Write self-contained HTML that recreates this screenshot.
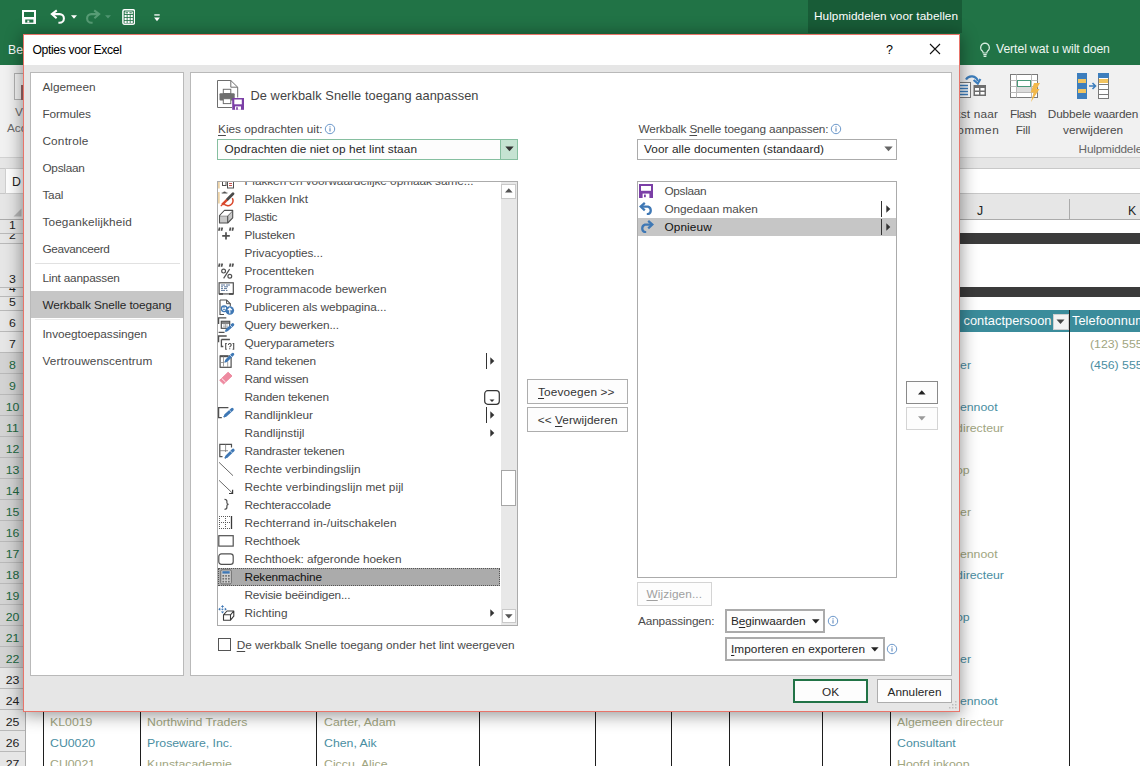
<!DOCTYPE html>
<html><head><meta charset="utf-8"><title>Opties voor Excel</title>
<style>
html,body{margin:0;padding:0;}
body{width:1140px;height:766px;overflow:hidden;position:relative;background:#fff;font-family:"Liberation Sans",sans-serif;}
.r{position:absolute;box-sizing:border-box;}
.t{position:absolute;white-space:nowrap;line-height:16px;height:16px;}
u{text-decoration:underline;text-underline-offset:1.5px;text-decoration-thickness:1px;}
#bg,#dlg{position:absolute;left:0;top:0;width:1140px;height:766px;overflow:hidden;}
</style></head><body>
<div id="bg">
<div class="r" style="left:0px;top:0px;width:1140px;height:65px;background:#217346;"></div>
<div class="r" style="left:808px;top:0px;width:154px;height:33px;background:#185c37;"></div>
<div class="t" style="left:814.00px;top:7.91px;font-size:11.80px;color:#fff;letter-spacing:0.040px;">Hulpmiddelen voor tabellen</div>
<svg class="r" style="left:22px;top:10px;" width="14" height="14" viewBox="0 0 14 14"><rect x="1" y="1" width="12" height="12" fill="none" stroke="#fff" stroke-width="2"/><rect x="1" y="7" width="12" height="7" fill="#fff"/><rect x="3.200" y="9.500" width="8.200" height="3.100" fill="#217346"/><rect x="5.300" y="10.500" width="2" height="2.100" fill="#fff"/></svg>
<svg class="r" style="left:50px;top:9px;" width="16" height="15" viewBox="0 0 16 15"><path d="M6.800 1.400 L1.900 5.100 L6.600 9.200" fill="none" stroke="#fff" stroke-width="2.100"/><path d="M2.400 5.100 H9.600 A4.300 4.300 0 0 1 9.600 13.700 H8.400" fill="none" stroke="#fff" stroke-width="2.100"/></svg>
<svg class="r" style="left:70.5px;top:14.5px;" width="6" height="4" viewBox="0 0 6 4"><path d="M0 0.200h6L3 3.800z" fill="#fff"/></svg>
<svg class="r" style="left:85px;top:9px;" width="16" height="15" viewBox="0 0 16 15"><g opacity="0.400"><path d="M9.200 1.400 L14.100 5.100 L9.400 9.200" fill="none" stroke="#a9d9bd" stroke-width="2.100"/><path d="M13.600 5.100 H6.400 A4.300 4.300 0 0 0 6.400 13.700 H7.600" fill="none" stroke="#a9d9bd" stroke-width="2.100"/></g></svg>
<svg class="r" style="left:105px;top:15px;" width="6" height="4" viewBox="0 0 6 4"><path d="M0 0.200h6L3 3.600z" fill="#4f9470"/></svg>
<svg class="r" style="left:121.5px;top:9px;" width="13.5" height="16" viewBox="0 0 13.5 16"><rect x="0.900" y="0.800" width="11.700" height="14.400" rx="1.500" fill="none" stroke="#fff" stroke-width="1.500"/><rect x="2.700" y="2.500" width="8.100" height="2.600" rx="0.600" fill="#fff"/><rect x="3.600" y="3.300" width="2.400" height="1" fill="#217346"/><rect x="7.400" y="3.300" width="2.400" height="1" fill="#217346"/><rect x="2.5" y="5.9" width="2.200" height="2.200" fill="#fff"/><rect x="5.55" y="5.9" width="2.200" height="2.200" fill="#fff"/><rect x="8.6" y="5.9" width="2.200" height="2.200" fill="#fff"/><rect x="2.5" y="8.9" width="2.200" height="2.200" fill="#fff"/><rect x="5.55" y="8.9" width="2.200" height="2.200" fill="#fff"/><rect x="8.6" y="8.9" width="2.200" height="2.200" fill="#fff"/><rect x="2.5" y="11.9" width="2.200" height="2.200" fill="#fff"/><rect x="5.55" y="11.9" width="2.200" height="2.200" fill="#fff"/><rect x="8.6" y="11.9" width="2.200" height="2.200" fill="#fff"/></svg>
<svg class="r" style="left:153.5px;top:13.5px;" width="6" height="8" viewBox="0 0 6 8"><rect x="0.300" y="0.300" width="5.400" height="1.300" fill="#fff"/><path d="M0.100 3.500h5.800L3 7.200z" fill="#fff"/></svg>
<div class="t" style="left:8.00px;top:41.77px;font-size:12.20px;color:#fff;">Bes</div>
<svg class="r" style="left:978.5px;top:42px;" width="12" height="16" viewBox="0 0 12 16"><path d="M6 1.2a4.4 4.4 0 0 0-2.6 7.9c.5.5.8 1.1.8 1.9h3.6c0-.8.3-1.4.8-1.9A4.4 4.4 0 0 0 6 1.2z" fill="none" stroke="#d6ecdf" stroke-width="1.2"/><path d="M4.3 12.6h3.4M4.6 14.4h2.8" stroke="#d6ecdf" stroke-width="1.2"/></svg>
<div class="t" style="left:996.00px;top:41.27px;font-size:12.20px;color:#eef6f1;letter-spacing:-0.061px;">Vertel wat u wilt doen</div>
<div class="r" style="left:0px;top:65px;width:1140px;height:92px;background:#f1f1f1;"></div>
<div class="r" style="left:0px;top:157px;width:1140px;height:1px;background:#d2d2d2;"></div>
<div class="r" style="left:0px;top:158px;width:1140px;height:10px;background:#e6e6e6;"></div>
<div class="r" style="left:0px;top:168px;width:1140px;height:1px;background:#c8c8c8;"></div>
<div class="r" style="left:0px;top:169px;width:1140px;height:24px;background:#fff;"></div>
<div class="r" style="left:0px;top:169px;width:5px;height:24px;background:#e6e6e6;"></div>
<div class="r" style="left:0px;top:193px;width:1140px;height:1px;background:#c8c8c8;"></div>
<div class="r" style="left:0px;top:194px;width:1140px;height:25px;background:#e6e6e6;"></div>
<div class="r" style="left:0px;top:219px;width:1140px;height:1px;background:#ababab;"></div>
<div class="r" style="left:14px;top:73px;width:12px;height:27px;border:1px solid #b4b4b4;background:#f6f6f6;"></div>
<div class="t" style="left:15.00px;top:104.41px;font-size:11.80px;color:#6a6a6a;">V</div>
<div class="t" style="left:7.00px;top:120.41px;font-size:11.80px;color:#6a6a6a;">Acc</div>
<div class="r" style="left:21px;top:85px;width:3px;height:15px;background:#9a6a6a;"></div>
<div class="r" style="left:5px;top:168px;width:40px;height:26px;background:#fff;border:1px solid #d0d0d0;"></div>
<div class="t" style="left:12.00px;top:173.74px;font-size:12.30px;color:#222;">D</div>
<div class="t" style="left:970.00px;width:400px;margin-left:-200px;text-align:center;top:105.91px;font-size:11.80px;color:#4a4a4a;letter-spacing:0.174px;">Tekst naar</div>
<div class="t" style="left:970.00px;width:400px;margin-left:-200px;text-align:center;top:121.91px;font-size:11.80px;color:#4a4a4a;letter-spacing:0.510px;">kolommen</div>
<div class="t" style="left:1023.00px;width:400px;margin-left:-200px;text-align:center;top:105.91px;font-size:11.80px;color:#4a4a4a;letter-spacing:-0.589px;">Flash</div>
<div class="t" style="left:1023.00px;width:400px;margin-left:-200px;text-align:center;top:121.91px;font-size:11.80px;color:#4a4a4a;letter-spacing:-0.124px;">Fill</div>
<div class="t" style="left:1093.00px;width:400px;margin-left:-200px;text-align:center;top:105.91px;font-size:11.80px;color:#4a4a4a;letter-spacing:-0.143px;">Dubbele waarden</div>
<div class="t" style="left:1093.00px;width:400px;margin-left:-200px;text-align:center;top:121.91px;font-size:11.80px;color:#4a4a4a;letter-spacing:-0.034px;">verwijderen</div>
<div class="t" style="left:1078.60px;top:140.91px;font-size:11.80px;color:#666;letter-spacing:-0.196px;">Hulpmiddelen</div>
<svg class="r" style="left:944px;top:72px;" width="44" height="27" viewBox="0 0 44 27"><g fill="none"><path d="M22 7.500a6.500 6.500 0 0 1 11.800 1.500" stroke="#3d7ebd" stroke-width="2.200"/><path d="M29.600 8l4.200 3.600 2.600-4.600" stroke="#3d7ebd" stroke-width="2.200"/>
<rect x="2.500" y="10.500" width="24" height="15" fill="#fff" stroke="#7a7a7a"/><path d="M5 13.500h19M5 16.500h19M5 19.500h19M5 22.500h19" stroke="#3d7ebd" stroke-width="1.500"/>
<rect x="29.500" y="13" width="12.500" height="11" fill="#6e6e6e"/><rect x="31" y="16" width="4" height="2.500" fill="#fff"/><rect x="36.500" y="16" width="4" height="2.500" fill="#fff"/><rect x="31" y="20" width="4" height="2.500" fill="#fff"/><rect x="36.500" y="20" width="4" height="2.500" fill="#fff"/></g></svg>
<svg class="r" style="left:1009px;top:73px;" width="32" height="30" viewBox="0 0 32 30"><rect x="1.5" y="1.5" width="27" height="23" fill="#fff" stroke="#7a7a7a"/><path d="M7.5 1.5v23M1.5 7.5h27M1.5 13.5h27M1.5 19.5h27M22.5 1.5v23" stroke="#b9b9b9" fill="none"/><rect x="8" y="14" width="14" height="5" fill="#dcdcdc"/><rect x="8.5" y="7.5" width="13" height="6" fill="#fff" stroke="#4a9a7a"/><path d="M25 10h6l-3.5 6h3L22 29l2.6-9.5h-3z" fill="#f2b84b"/></svg>
<svg class="r" style="left:1076px;top:72px;" width="34" height="29" viewBox="0 0 34 29"><rect x="1" y="1" width="10" height="26" fill="#3d7ebd"/><rect x="2" y="7" width="8" height="4" fill="#f2c45f"/><rect x="2" y="17" width="8" height="4" fill="#f2c45f"/><rect x="22.5" y="1.5" width="10" height="25" fill="#fff" stroke="#7a7a7a"/><rect x="22" y="1" width="11" height="5" fill="#3d7ebd"/><rect x="23" y="7" width="9" height="4" fill="#f2c45f"/><path d="M22.5 12.500h10M22.500 17.500h10M22.500 22.500h10" stroke="#7a7a7a"/><path d="M13 14h6M16.500 11l3 3-3 3" stroke="#3d7ebd" stroke-width="1.600" fill="none"/></svg>
<div class="r" style="left:1069px;top:199px;width:1px;height:20px;background:#ababab;"></div>
<div class="t" style="left:977.00px;top:202.74px;font-size:12.30px;color:#222;">J</div>
<div class="t" style="left:1128.00px;top:202.74px;font-size:12.30px;color:#222;">K</div>
<svg class="r" style="left:13px;top:208px;" width="9" height="9" viewBox="0 0 9 9"><path d="M8.500 0.500v8h-8z" fill="#b7b7b7"/></svg>
<div class="r" style="left:25px;top:233px;width:1115px;height:11px;background:#3b3b3b;"></div>
<div class="r" style="left:25px;top:287px;width:1115px;height:10px;background:#3b3b3b;"></div>
<div class="r" style="left:25px;top:310px;width:1115px;height:22px;background:#3b8c9b;"></div>
<div class="r" style="left:1069px;top:310px;width:1px;height:456px;background:#1e1e1e;"></div>
<div class="t" style="left:963.50px;top:313.16px;font-size:12.80px;color:#fff;letter-spacing:0.037px;">contactpersoon</div>
<div class="r" style="left:1053px;top:314px;width:16px;height:16px;background:#f3f3f3;border:1px solid #cfcfcf;"></div>
<svg class="r" style="left:1056px;top:319px;" width="9" height="6" viewBox="0 0 9 6"><path d="M0.500 0.500h8L4.500 5z" fill="#444"/></svg>
<div class="t" style="left:1072.00px;top:313.16px;font-size:12.80px;color:#fff;letter-spacing:0.051px;">Telefoonnummer</div>
<div class="r" style="left:0px;top:220px;width:25px;height:546px;background:#e6e6e6;"></div>
<div class="r" style="left:0px;top:352px;width:25px;height:315px;background:#d3d3d3;"></div>
<div class="r" style="left:25px;top:220px;width:1px;height:546px;background:#ababab;"></div>
<div class="r" style="left:0px;top:233px;width:25px;height:1px;background:#b9b9b9;"></div>
<div class="r" style="left:0px;top:243px;width:25px;height:1px;background:#b9b9b9;"></div>
<div class="r" style="left:0px;top:287px;width:25px;height:1px;background:#b9b9b9;"></div>
<div class="r" style="left:0px;top:296px;width:25px;height:1px;background:#b9b9b9;"></div>
<div class="r" style="left:0px;top:310px;width:25px;height:1px;background:#b9b9b9;"></div>
<div class="r" style="left:0px;top:331px;width:25px;height:1px;background:#b9b9b9;"></div>
<div class="r" style="left:0px;top:352px;width:25px;height:1px;background:#b9b9b9;"></div>
<div class="r" style="left:0px;top:373px;width:25px;height:1px;background:#b9b9b9;"></div>
<div class="r" style="left:0px;top:394px;width:25px;height:1px;background:#b9b9b9;"></div>
<div class="r" style="left:0px;top:415px;width:25px;height:1px;background:#b9b9b9;"></div>
<div class="r" style="left:0px;top:436px;width:25px;height:1px;background:#b9b9b9;"></div>
<div class="r" style="left:0px;top:457px;width:25px;height:1px;background:#b9b9b9;"></div>
<div class="r" style="left:0px;top:478px;width:25px;height:1px;background:#b9b9b9;"></div>
<div class="r" style="left:0px;top:499px;width:25px;height:1px;background:#b9b9b9;"></div>
<div class="r" style="left:0px;top:520px;width:25px;height:1px;background:#b9b9b9;"></div>
<div class="r" style="left:0px;top:541px;width:25px;height:1px;background:#b9b9b9;"></div>
<div class="r" style="left:0px;top:562px;width:25px;height:1px;background:#b9b9b9;"></div>
<div class="r" style="left:0px;top:583px;width:25px;height:1px;background:#b9b9b9;"></div>
<div class="r" style="left:0px;top:604px;width:25px;height:1px;background:#b9b9b9;"></div>
<div class="r" style="left:0px;top:625px;width:25px;height:1px;background:#b9b9b9;"></div>
<div class="r" style="left:0px;top:646px;width:25px;height:1px;background:#b9b9b9;"></div>
<div class="r" style="left:0px;top:667px;width:25px;height:1px;background:#b9b9b9;"></div>
<div class="r" style="left:0px;top:688px;width:25px;height:1px;background:#b9b9b9;"></div>
<div class="r" style="left:0px;top:709px;width:25px;height:1px;background:#b9b9b9;"></div>
<div class="r" style="left:0px;top:730px;width:25px;height:1px;background:#b9b9b9;"></div>
<div class="r" style="left:0px;top:751px;width:25px;height:1px;background:#b9b9b9;"></div>
<div class="r" style="left:0px;top:772px;width:25px;height:1px;background:#b9b9b9;"></div>
<div class="r" style="left:0;top:220px;width:25px;height:13px;overflow:hidden;">
<div class="t" style="left:0;width:25px;text-align:center;top:-2.62px;font-size:11.30px;color:#222;transform:scaleX(1.0885);">1</div></div>
<div class="r" style="left:0;top:234px;width:25px;height:9px;overflow:hidden;">
<div class="t" style="left:0;width:25px;text-align:center;top:-6.62px;font-size:11.30px;color:#222;transform:scaleX(1.0885);">2</div></div>
<div class="r" style="left:0;top:244px;width:25px;height:43px;overflow:hidden;">
<div class="t" style="left:0;width:25px;text-align:center;top:27.38px;font-size:11.30px;color:#222;transform:scaleX(1.0885);">3</div></div>
<div class="r" style="left:0;top:288px;width:25px;height:8px;overflow:hidden;">
<div class="t" style="left:0;width:25px;text-align:center;top:-7.62px;font-size:11.30px;color:#222;transform:scaleX(1.0885);">4</div></div>
<div class="r" style="left:0;top:297px;width:25px;height:13px;overflow:hidden;">
<div class="t" style="left:0;width:25px;text-align:center;top:-2.62px;font-size:11.30px;color:#222;transform:scaleX(1.0885);">5</div></div>
<div class="r" style="left:0;top:311px;width:25px;height:20px;overflow:hidden;">
<div class="t" style="left:0;width:25px;text-align:center;top:4.38px;font-size:11.30px;color:#222;transform:scaleX(1.0885);">6</div></div>
<div class="r" style="left:0;top:332px;width:25px;height:20px;overflow:hidden;">
<div class="t" style="left:0;width:25px;text-align:center;top:4.38px;font-size:11.30px;color:#222;transform:scaleX(1.0885);">7</div></div>
<div class="r" style="left:0;top:353px;width:25px;height:20px;overflow:hidden;">
<div class="t" style="left:0;width:25px;text-align:center;top:4.38px;font-size:11.30px;color:#21683f;transform:scaleX(1.0885);">8</div></div>
<div class="r" style="left:0;top:374px;width:25px;height:20px;overflow:hidden;">
<div class="t" style="left:0;width:25px;text-align:center;top:4.38px;font-size:11.30px;color:#21683f;transform:scaleX(1.0885);">9</div></div>
<div class="r" style="left:0;top:395px;width:25px;height:20px;overflow:hidden;">
<div class="t" style="left:0;width:25px;text-align:center;top:4.38px;font-size:11.30px;color:#21683f;transform:scaleX(1.0885);">10</div></div>
<div class="r" style="left:0;top:416px;width:25px;height:20px;overflow:hidden;">
<div class="t" style="left:0;width:25px;text-align:center;top:4.38px;font-size:11.30px;color:#21683f;transform:scaleX(1.0885);">11</div></div>
<div class="r" style="left:0;top:437px;width:25px;height:20px;overflow:hidden;">
<div class="t" style="left:0;width:25px;text-align:center;top:4.38px;font-size:11.30px;color:#21683f;transform:scaleX(1.0885);">12</div></div>
<div class="r" style="left:0;top:458px;width:25px;height:20px;overflow:hidden;">
<div class="t" style="left:0;width:25px;text-align:center;top:4.38px;font-size:11.30px;color:#21683f;transform:scaleX(1.0885);">13</div></div>
<div class="r" style="left:0;top:479px;width:25px;height:20px;overflow:hidden;">
<div class="t" style="left:0;width:25px;text-align:center;top:4.38px;font-size:11.30px;color:#21683f;transform:scaleX(1.0885);">14</div></div>
<div class="r" style="left:0;top:500px;width:25px;height:20px;overflow:hidden;">
<div class="t" style="left:0;width:25px;text-align:center;top:4.38px;font-size:11.30px;color:#21683f;transform:scaleX(1.0885);">15</div></div>
<div class="r" style="left:0;top:521px;width:25px;height:20px;overflow:hidden;">
<div class="t" style="left:0;width:25px;text-align:center;top:4.38px;font-size:11.30px;color:#21683f;transform:scaleX(1.0885);">16</div></div>
<div class="r" style="left:0;top:542px;width:25px;height:20px;overflow:hidden;">
<div class="t" style="left:0;width:25px;text-align:center;top:4.38px;font-size:11.30px;color:#21683f;transform:scaleX(1.0885);">17</div></div>
<div class="r" style="left:0;top:563px;width:25px;height:20px;overflow:hidden;">
<div class="t" style="left:0;width:25px;text-align:center;top:4.38px;font-size:11.30px;color:#21683f;transform:scaleX(1.0885);">18</div></div>
<div class="r" style="left:0;top:584px;width:25px;height:20px;overflow:hidden;">
<div class="t" style="left:0;width:25px;text-align:center;top:4.38px;font-size:11.30px;color:#21683f;transform:scaleX(1.0885);">19</div></div>
<div class="r" style="left:0;top:605px;width:25px;height:20px;overflow:hidden;">
<div class="t" style="left:0;width:25px;text-align:center;top:4.38px;font-size:11.30px;color:#21683f;transform:scaleX(1.0885);">20</div></div>
<div class="r" style="left:0;top:626px;width:25px;height:20px;overflow:hidden;">
<div class="t" style="left:0;width:25px;text-align:center;top:4.38px;font-size:11.30px;color:#21683f;transform:scaleX(1.0885);">21</div></div>
<div class="r" style="left:0;top:647px;width:25px;height:20px;overflow:hidden;">
<div class="t" style="left:0;width:25px;text-align:center;top:4.38px;font-size:11.30px;color:#21683f;transform:scaleX(1.0885);">22</div></div>
<div class="r" style="left:0;top:668px;width:25px;height:20px;overflow:hidden;">
<div class="t" style="left:0;width:25px;text-align:center;top:4.38px;font-size:11.30px;color:#222;transform:scaleX(1.0885);">23</div></div>
<div class="r" style="left:0;top:689px;width:25px;height:20px;overflow:hidden;">
<div class="t" style="left:0;width:25px;text-align:center;top:4.38px;font-size:11.30px;color:#222;transform:scaleX(1.0885);">24</div></div>
<div class="r" style="left:0;top:710px;width:25px;height:20px;overflow:hidden;">
<div class="t" style="left:0;width:25px;text-align:center;top:4.38px;font-size:11.30px;color:#222;transform:scaleX(1.0885);">25</div></div>
<div class="r" style="left:0;top:731px;width:25px;height:20px;overflow:hidden;">
<div class="t" style="left:0;width:25px;text-align:center;top:4.38px;font-size:11.30px;color:#222;transform:scaleX(1.0885);">26</div></div>
<div class="r" style="left:0;top:752px;width:25px;height:20px;overflow:hidden;">
<div class="t" style="left:0;width:25px;text-align:center;top:4.38px;font-size:11.30px;color:#222;transform:scaleX(1.0885);">27</div></div>
<div class="r" style="left:43px;top:700px;width:1.4px;height:66px;background:#1e1e1e;"></div>
<div class="r" style="left:140px;top:700px;width:1.4px;height:66px;background:#1e1e1e;"></div>
<div class="r" style="left:316px;top:700px;width:1.4px;height:66px;background:#1e1e1e;"></div>
<div class="r" style="left:479px;top:700px;width:1.4px;height:66px;background:#1e1e1e;"></div>
<div class="r" style="left:595px;top:700px;width:1.4px;height:66px;background:#1e1e1e;"></div>
<div class="r" style="left:671px;top:700px;width:1.4px;height:66px;background:#1e1e1e;"></div>
<div class="r" style="left:729px;top:700px;width:1.4px;height:66px;background:#1e1e1e;"></div>
<div class="r" style="left:822px;top:700px;width:1.4px;height:66px;background:#1e1e1e;"></div>
<div class="r" style="left:890px;top:700px;width:1.4px;height:66px;background:#1e1e1e;"></div>
<div class="t" style="left:50.00px;top:714.38px;font-size:11.30px;color:#9fa57f;transform:scaleX(1.0885);transform-origin:left center;">KL0019</div>
<div class="t" style="left:147.00px;top:714.38px;font-size:11.30px;color:#9fa57f;transform:scaleX(1.0885);transform-origin:left center;">Northwind Traders</div>
<div class="t" style="left:323.50px;top:714.38px;font-size:11.30px;color:#9fa57f;transform:scaleX(1.0885);transform-origin:left center;">Carter, Adam</div>
<div class="t" style="left:897.00px;top:714.38px;font-size:11.30px;color:#9fa57f;transform:scaleX(1.0885);transform-origin:left center;">Algemeen directeur</div>
<div class="t" style="left:50.00px;top:735.38px;font-size:11.30px;color:#4a8ea2;transform:scaleX(1.0885);transform-origin:left center;">CU0020</div>
<div class="t" style="left:147.00px;top:735.38px;font-size:11.30px;color:#4a8ea2;transform:scaleX(1.0885);transform-origin:left center;">Proseware, Inc.</div>
<div class="t" style="left:323.50px;top:735.38px;font-size:11.30px;color:#4a8ea2;transform:scaleX(1.0885);transform-origin:left center;">Chen, Aik</div>
<div class="t" style="left:897.00px;top:735.38px;font-size:11.30px;color:#4a8ea2;transform:scaleX(1.0885);transform-origin:left center;">Consultant</div>
<div class="t" style="left:50.00px;top:756.38px;font-size:11.30px;color:#9fa57f;transform:scaleX(1.0885);transform-origin:left center;">CU0021</div>
<div class="t" style="left:147.00px;top:756.38px;font-size:11.30px;color:#9fa57f;transform:scaleX(1.0885);transform-origin:left center;">Kunstacademie</div>
<div class="t" style="left:323.50px;top:756.38px;font-size:11.30px;color:#9fa57f;transform:scaleX(1.0885);transform-origin:left center;">Ciccu, Alice</div>
<div class="t" style="left:897.00px;top:756.38px;font-size:11.30px;color:#9fa57f;transform:scaleX(1.0885);transform-origin:left center;">Hoofd inkoop</div>
<div class="t" style="right:168.50px;text-align:right;top:357.38px;font-size:11.30px;color:#4a8ea2;transform:scaleX(1.0885);transform-origin:right center;">er</div>
<div class="t" style="right:142.50px;text-align:right;top:399.38px;font-size:11.30px;color:#4a8ea2;transform:scaleX(1.0885);transform-origin:right center;">ennoot</div>
<div class="t" style="right:136.00px;text-align:right;top:420.38px;font-size:11.30px;color:#9fa57f;transform:scaleX(1.0885);transform-origin:right center;">directeur</div>
<div class="t" style="right:170.50px;text-align:right;top:462.38px;font-size:11.30px;color:#9fa57f;transform:scaleX(1.0885);transform-origin:right center;">op</div>
<div class="t" style="right:168.50px;text-align:right;top:504.38px;font-size:11.30px;color:#9fa57f;transform:scaleX(1.0885);transform-origin:right center;">er</div>
<div class="t" style="right:142.50px;text-align:right;top:546.38px;font-size:11.30px;color:#9fa57f;transform:scaleX(1.0885);transform-origin:right center;">ennoot</div>
<div class="t" style="right:136.00px;text-align:right;top:567.38px;font-size:11.30px;color:#4a8ea2;transform:scaleX(1.0885);transform-origin:right center;">directeur</div>
<div class="t" style="right:170.50px;text-align:right;top:609.38px;font-size:11.30px;color:#4a8ea2;transform:scaleX(1.0885);transform-origin:right center;">op</div>
<div class="t" style="right:168.50px;text-align:right;top:651.38px;font-size:11.30px;color:#4a8ea2;transform:scaleX(1.0885);transform-origin:right center;">er</div>
<div class="t" style="right:142.50px;text-align:right;top:693.38px;font-size:11.30px;color:#4a8ea2;transform:scaleX(1.0885);transform-origin:right center;">ennoot</div>
<div class="t" style="left:1090.00px;top:336.38px;font-size:11.30px;color:#9fa57f;transform:scaleX(1.0885);transform-origin:left center;">(123) 555</div>
<div class="t" style="left:1090.00px;top:357.38px;font-size:11.30px;color:#4a8ea2;transform:scaleX(1.0885);transform-origin:left center;">(456) 555</div>
</div>
<div id="dlg">
<div class="r" style="left:23px;top:34px;width:937px;height:678px;background:#e6e6e6;border:1px solid #e8746a;box-shadow:0 2px 16px 1px rgba(0,0,0,0.42);"></div>
<div class="r" style="left:24px;top:35px;width:935px;height:30px;background:#fff;"></div>
<div class="t" style="left:32.50px;top:41.57px;font-size:12.20px;color:#000;letter-spacing:-0.382px;">Opties voor Excel</div>
<div class="t" style="left:886.00px;top:41.67px;font-size:12.50px;color:#000;">?</div>
<svg class="r" style="left:929px;top:43px;" width="12" height="12" viewBox="0 0 12 12"><path d="M1 1l10 10M11 1L1 11" stroke="#111" stroke-width="1.1" fill="none"/></svg>
<div class="r" style="left:30px;top:72px;width:154px;height:604px;background:#fff;border:1px solid #b9b9b9;"></div>
<div class="r" style="left:31px;top:291px;width:152px;height:27px;background:#c6c6c6;"></div>
<div class="r" style="left:35px;top:263px;width:145px;height:1px;background:#e1e1e1;"></div>
<div class="r" style="left:35px;top:319px;width:145px;height:1px;background:#ececec;"></div>
<div class="t" style="left:42.40px;top:78.91px;font-size:11.80px;color:#4a4a4a;letter-spacing:0.009px;">Algemeen</div>
<div class="t" style="left:42.40px;top:105.91px;font-size:11.80px;color:#4a4a4a;letter-spacing:-0.097px;">Formules</div>
<div class="t" style="left:42.40px;top:132.91px;font-size:11.80px;color:#4a4a4a;letter-spacing:0.200px;">Controle</div>
<div class="t" style="left:42.40px;top:159.91px;font-size:11.80px;color:#4a4a4a;letter-spacing:-0.242px;">Opslaan</div>
<div class="t" style="left:42.40px;top:186.91px;font-size:11.80px;color:#4a4a4a;letter-spacing:-0.216px;">Taal</div>
<div class="t" style="left:42.40px;top:213.91px;font-size:11.80px;color:#4a4a4a;letter-spacing:0.150px;">Toegankelijkheid</div>
<div class="t" style="left:42.40px;top:240.91px;font-size:11.80px;color:#4a4a4a;letter-spacing:-0.335px;">Geavanceerd</div>
<div class="t" style="left:42.40px;top:269.91px;font-size:11.80px;color:#4a4a4a;letter-spacing:-0.196px;">Lint aanpassen</div>
<div class="t" style="left:42.40px;top:296.91px;font-size:11.80px;color:#262626;letter-spacing:-0.081px;">Werkbalk Snelle toegang</div>
<div class="t" style="left:42.40px;top:325.91px;font-size:11.80px;color:#4a4a4a;letter-spacing:-0.049px;">Invoegtoepassingen</div>
<div class="t" style="left:42.40px;top:352.91px;font-size:11.80px;color:#4a4a4a;letter-spacing:0.105px;">Vertrouwenscentrum</div>
<div class="r" style="left:190px;top:72px;width:762px;height:604px;background:#fff;border:1px solid #b9b9b9;"></div>
<div class="t" style="left:250.50px;top:88.06px;font-size:12.80px;color:#444;letter-spacing:0.069px;">De werkbalk Snelle toegang aanpassen</div>
<div class="t" style="left:218.00px;top:120.91px;font-size:11.80px;color:#4a4a4a;letter-spacing:0.011px;"><u>K</u>ies opdrachten uit:</div>
<div class="t" style="left:638.60px;top:120.91px;font-size:11.80px;color:#4a4a4a;letter-spacing:-0.160px;">Werkbalk <u>S</u>nelle toegang aanpassen:</div>
<svg class="r" style="left:324px;top:123px;" width="12" height="12" viewBox="0 0 12 12"><circle cx="6" cy="6" r="4.700" fill="#fff" stroke="#5b8cc4" stroke-width="0.900"/><rect x="5.500" y="5.200" width="1" height="3.300" fill="#4a7ab5"/><rect x="5.500" y="3.300" width="1" height="1.100" fill="#4a7ab5"/></svg>
<svg class="r" style="left:829.5px;top:123px;" width="12" height="12" viewBox="0 0 12 12"><circle cx="6" cy="6" r="4.700" fill="#fff" stroke="#5b8cc4" stroke-width="0.900"/><rect x="5.500" y="5.200" width="1" height="3.300" fill="#4a7ab5"/><rect x="5.500" y="3.300" width="1" height="1.100" fill="#4a7ab5"/></svg>
<div class="r" style="left:217px;top:139px;width:301px;height:21px;background:#fdfdfd;border:1px solid #86bfa0;"></div>
<div class="r" style="left:500px;top:140px;width:17px;height:19px;background:#c5e3d2;border-left:1px solid #86bfa0;"></div>
<svg class="r" style="left:505px;top:146px;" width="9" height="6" viewBox="0 0 9 6"><path d="M0.300 0.500h8.400L4.500 5.200z" fill="#333"/></svg>
<div class="t" style="left:224.50px;top:141.41px;font-size:11.80px;color:#262626;letter-spacing:0.081px;">Opdrachten die niet op het lint staan</div>
<div class="r" style="left:637px;top:139px;width:260px;height:21px;background:#fff;border:1px solid #ababab;"></div>
<svg class="r" style="left:884px;top:146px;" width="9" height="6" viewBox="0 0 9 6"><path d="M0.300 0.500h8.400L4.500 5.200z" fill="#666"/></svg>
<div class="t" style="left:644.00px;top:141.41px;font-size:11.80px;color:#262626;letter-spacing:0.072px;">Voor alle documenten (standaard)</div>
<div class="r" style="left:217px;top:181px;width:301px;height:445px;background:#fff;border:1px solid #ababab;"></div>
<div class="r" style="left:501px;top:182px;width:16px;height:443px;background:#e8e8e8;"></div>
<div class="r" style="left:501px;top:184px;width:15px;height:15px;background:#fff;border:1px solid #c9c9c9;"></div>
<svg class="r" style="left:505px;top:188px;" width="8" height="5" viewBox="0 0 8 5"><path d="M0 4.500h7.600L3.800 0.300z" fill="#555"/></svg>
<div class="r" style="left:501px;top:470px;width:15px;height:36px;background:#fff;border:1px solid #a6a6a6;"></div>
<div class="r" style="left:502px;top:609px;width:14px;height:14px;background:#fff;border:1px solid #c9c9c9;"></div>
<svg class="r" style="left:505px;top:614px;" width="8" height="5" viewBox="0 0 8 5"><path d="M0 0.300h7.600L3.800 4.500z" fill="#555"/></svg>
<div class="r" style="left:218px;top:568px;width:282px;height:18px;background:#ababab;border:1px dotted #555;"></div>
<div class="r" style="left:218px;top:182px;width:283px;height:443px;overflow:hidden;">
<div class="t" style="left:26.50px;top:-9.09px;font-size:11.8px;color:#4a4a4a;letter-spacing:-0.047px;">Plakken en voorwaardelijke opmaak same...</div>
<div class="t" style="left:26.50px;top:8.91px;font-size:11.8px;color:#4a4a4a;letter-spacing:-0.071px;">Plakken Inkt</div>
<div class="t" style="left:26.50px;top:26.91px;font-size:11.8px;color:#4a4a4a;letter-spacing:-0.292px;">Plastic</div>
<div class="t" style="left:26.50px;top:44.91px;font-size:11.8px;color:#4a4a4a;letter-spacing:-0.165px;">Plusteken</div>
<div class="t" style="left:26.50px;top:62.91px;font-size:11.8px;color:#4a4a4a;letter-spacing:-0.100px;">Privacyopties...</div>
<div class="t" style="left:26.50px;top:80.91px;font-size:11.8px;color:#4a4a4a;letter-spacing:-0.003px;">Procentteken</div>
<div class="t" style="left:26.50px;top:98.91px;font-size:11.8px;color:#4a4a4a;letter-spacing:0.016px;">Programmacode bewerken</div>
<div class="t" style="left:26.50px;top:116.91px;font-size:11.8px;color:#4a4a4a;letter-spacing:-0.089px;">Publiceren als webpagina...</div>
<div class="t" style="left:26.50px;top:134.91px;font-size:11.8px;color:#4a4a4a;letter-spacing:-0.119px;">Query bewerken...</div>
<div class="t" style="left:26.50px;top:152.91px;font-size:11.8px;color:#4a4a4a;letter-spacing:-0.129px;">Queryparameters</div>
<div class="t" style="left:26.50px;top:170.91px;font-size:11.8px;color:#4a4a4a;letter-spacing:-0.180px;">Rand tekenen</div>
<div class="t" style="left:26.50px;top:188.91px;font-size:11.8px;color:#4a4a4a;letter-spacing:-0.356px;">Rand wissen</div>
<div class="t" style="left:26.50px;top:206.91px;font-size:11.8px;color:#4a4a4a;letter-spacing:-0.162px;">Randen tekenen</div>
<div class="t" style="left:26.50px;top:224.91px;font-size:11.8px;color:#4a4a4a;letter-spacing:0.024px;">Randlijnkleur</div>
<div class="t" style="left:26.50px;top:242.91px;font-size:11.8px;color:#4a4a4a;letter-spacing:0.027px;">Randlijnstijl</div>
<div class="t" style="left:26.50px;top:260.91px;font-size:11.8px;color:#4a4a4a;letter-spacing:-0.214px;">Randraster tekenen</div>
<div class="t" style="left:26.50px;top:278.91px;font-size:11.8px;color:#4a4a4a;letter-spacing:0.027px;">Rechte verbindingslijn</div>
<div class="t" style="left:26.50px;top:296.91px;font-size:11.8px;color:#4a4a4a;letter-spacing:0.097px;">Rechte verbindingslijn met pijl</div>
<div class="t" style="left:26.50px;top:314.91px;font-size:11.8px;color:#4a4a4a;letter-spacing:-0.147px;">Rechteraccolade</div>
<div class="t" style="left:26.50px;top:332.91px;font-size:11.8px;color:#4a4a4a;letter-spacing:0.067px;">Rechterrand in-/uitschakelen</div>
<div class="t" style="left:26.50px;top:350.91px;font-size:11.8px;color:#4a4a4a;letter-spacing:-0.114px;">Rechthoek</div>
<div class="t" style="left:26.50px;top:368.91px;font-size:11.8px;color:#4a4a4a;letter-spacing:-0.043px;">Rechthoek: afgeronde hoeken</div>
<div class="t" style="left:26.50px;top:386.91px;font-size:11.8px;color:#111;letter-spacing:-0.110px;">Rekenmachine</div>
<div class="t" style="left:26.50px;top:404.91px;font-size:11.8px;color:#4a4a4a;letter-spacing:-0.177px;">Revisie beëindigen...</div>
<div class="t" style="left:26.50px;top:422.91px;font-size:11.8px;color:#4a4a4a;letter-spacing:0.053px;">Richting</div>
</div>
<svg class="r" style="left:218px;top:182px;" width="16" height="7" viewBox="0 10 16 7"><g transform="translate(0,0.500)"><rect x="0.200" y="0" width="1.400" height="16" fill="#e9c88f"/><rect x="4.500" y="8.500" width="3.500" height="4.500" fill="#fff" stroke="#505050"/><rect x="9.500" y="8.500" width="6" height="7" fill="#fff" stroke="#505050"/><path d="M11 11h3M11 13h3" stroke="#c0504d"/></g></svg>
<svg class="r" style="left:218px;top:190px;overflow:visible" width="16" height="17" viewBox="0 0 16 17"><g transform="translate(0,0.500)"><rect x="0.200" y="1.500" width="1.400" height="11.500" fill="#e9c88f"/><path d="M3.700 3h5.700v-1h-1.400a1.500 1.500 0 0 0 -2.900 0h-1.400z" fill="#505050"/><path d="M14.300 7.600a4.600 4.600 0 0 1 -8.500 5.200" stroke="#d9472b" stroke-width="1.500" fill="none"/><path d="M15 3.200L9.300 9" stroke="#4a4a4a" stroke-width="2.800" stroke-linecap="round"/><path d="M9 9.300L4.200 14.200" stroke="#d9472b" stroke-width="2.400"/><path d="M4.800 13.500L2.800 15.600" stroke="#d9472b" stroke-width="1.200"/></g></svg>
<svg class="r" style="left:218px;top:208px;overflow:visible" width="16" height="17" viewBox="0 0 16 17"><g transform="translate(0,0.500)"><path d="M1.500 7.200L6.500 1.900H14.700V9.300L9.700 14.500H1.500z" fill="#c9c9c9" stroke="#505050" stroke-width="1.100" stroke-linejoin="round"/><path d="M1.500 7.200H9.700V14.500M9.700 7.200L14.700 1.900" fill="none" stroke="#505050" stroke-width="1.100"/><path d="M2.100 7.200L6.700 2.400H14.100L9.500 7.200z" fill="#fff"/></g></svg>
<svg class="r" style="left:218px;top:226px;overflow:visible" width="16" height="17" viewBox="0 0 16 17"><g transform="translate(0,0.500)"><path d="M1.700 1.100L0.800 4.300M4.300 1.100L3.400 4.300M12.600 1.100L11.700 4.300M15.200 1.100L14.300 4.300" stroke="#505050" stroke-width="1.700"/><path d="M8 5.700v7.400M4.200 9.400h7.600" stroke="#505050" stroke-width="1.700" fill="none"/></g></svg>
<svg class="r" style="left:218px;top:262px;overflow:visible" width="16" height="17" viewBox="0 0 16 17"><g transform="translate(0,0.500)"><path d="M1.700 1.100L0.800 4.300M4.300 1.100L3.400 4.300M12.600 1.100L11.700 4.300M15.200 1.100L14.300 4.300" stroke="#505050" stroke-width="1.700"/><circle cx="5.600" cy="8.600" r="1.900" fill="none" stroke="#505050" stroke-width="1.200"/><circle cx="11.800" cy="13.700" r="1.900" fill="none" stroke="#505050" stroke-width="1.200"/><path d="M11.600 6.600L5.600 15.900" stroke="#505050" stroke-width="1.200"/></g></svg>
<svg class="r" style="left:218px;top:280px;overflow:visible" width="16" height="17" viewBox="0 0 16 17"><g transform="translate(0,0.500)"><rect x="1.100" y="2.300" width="14.200" height="11" fill="#fff" stroke="#505050" stroke-width="1.200"/><path d="M1 13.500h14.400" stroke="#505050" stroke-width="1.800"/><path d="M5 13.600h6" stroke="#fff" stroke-width="0.800"/><path d="M3 4.500h4M8 4.500h4M3 6.300h2M6 6.300h4M3 8.100h2M6 8.100h3M3 9.900h4M8 9.900h1.500" stroke="#4a6890" stroke-width="0.900"/></g></svg>
<svg class="r" style="left:218px;top:298px;overflow:visible" width="16" height="17" viewBox="0 0 16 17"><g transform="translate(0,0.500)"><path d="M2 1.500H8.600L12.300 5.200V8M2 1.500V16H6" fill="none" stroke="#505050" stroke-width="1.100"/><path d="M8.600 1.500V5.200H12.300" fill="none" stroke="#505050" stroke-width="1"/><circle cx="6.200" cy="10.300" r="2.800" fill="#fff" stroke="#3f78b5" stroke-width="1.300"/><path d="M5 9.300h2M5 11h2.600" stroke="#3f78b5" stroke-width="0.800"/><circle cx="11.800" cy="12" r="4.300" fill="#3f78b5"/><path d="M11.800 15V9.600M9.800 11.600L11.800 9.500L13.800 11.600" stroke="#fff" stroke-width="1.200" fill="none"/></g></svg>
<svg class="r" style="left:218px;top:316px;overflow:visible" width="16" height="17" viewBox="0 0 16 17"><g transform="translate(0,0.500)"><path d="M0.600 7.500V1.300H8.300M0.600 15.800H6.500" fill="none" stroke="#505050" stroke-width="1.300"/><rect x="3.300" y="4.800" width="8.400" height="7" fill="#fff" stroke="#505050" stroke-width="1.200"/><path d="M3.300 6.500h8.400" stroke="#505050" stroke-width="1.400"/><path d="M5 8.500h5M5 10.200h5M7.500 7v4.500" stroke="#9a9a9a" stroke-width="0.700"/><path d="M14.8 8.2L8.95 13.504" stroke="#3f78b5" stroke-width="3" stroke-linecap="round" fill="none"/><path d="M9.175 13.3L7.3 15" stroke="#3f78b5" stroke-width="1.600" fill="none"/><path d="M12.05 8.596L14.25 10.796" stroke="#fff" stroke-width="0.700" fill="none"/></g></svg>
<svg class="r" style="left:218px;top:334px;overflow:visible" width="16" height="17" viewBox="0 0 16 17"><g transform="translate(0,0.500)"><path d="M0.600 7.800V1.500H8.700M3.400 5H11.900M3.400 5V12H5.300" fill="none" stroke="#505050" stroke-width="1.300"/><path d="M8.800 9H7.700V14.800H8.800M14.600 9H15.700V14.800H14.600" fill="none" stroke="#505050" stroke-width="1.100"/><path d="M10.400 10.500a1.400 1.400 0 1 1 2 1.200c-.5.300-.7.500-.7 1.100M11.700 13.700v1" fill="none" stroke="#505050" stroke-width="1.100"/></g></svg>
<svg class="r" style="left:218px;top:352px;overflow:visible" width="16" height="17" viewBox="0 0 16 17"><g transform="translate(0,0.500)"><rect x="2.100" y="3.500" width="11" height="11.300" fill="#fff" stroke="#505050" stroke-width="1.200"/><path d="M2 3.800h8" stroke="#505050" stroke-width="1.800"/><path d="M5.500 4v10M9.700 9v5.500M2.500 10h4" stroke="#8a8a8a" stroke-width="0.800"/><path d="M14.8 1.8L8.56 8.04" stroke="#3f78b5" stroke-width="3" stroke-linecap="round" fill="none"/><path d="M8.8 7.8L6.8 9.8" stroke="#3f78b5" stroke-width="1.600" fill="none"/><path d="M11.94 2.46L14.14 4.66" stroke="#fff" stroke-width="0.700" fill="none"/></g></svg>
<svg class="r" style="left:218px;top:370px;overflow:visible" width="16" height="17" viewBox="0 0 16 17"><g transform="translate(0,0.500)"><path d="M10.100 1.800L14 5.400L5.600 13.400L1.700 9.800z" fill="#ee8aa0" stroke="#ee8aa0" stroke-width="1" stroke-linejoin="round"/><path d="M3.700 7.900L7.500 11.500" stroke="#fff" stroke-width="0.900"/></g></svg>
<svg class="r" style="left:218px;top:406px;overflow:visible" width="16" height="17" viewBox="0 0 16 17"><g transform="translate(0,0.500)"><path d="M10.400 1.200H0.600V11.200H3.800" fill="none" stroke="#505050" stroke-width="1.300"/><path d="M14.2 2.8L7.57 8.962" stroke="#3f78b5" stroke-width="3" stroke-linecap="round" fill="none"/><path d="M7.825 8.725L5.7 10.7" stroke="#3f78b5" stroke-width="1.600" fill="none"/><path d="M11.23 3.438L13.43 5.638" stroke="#fff" stroke-width="0.700" fill="none"/></g></svg>
<svg class="r" style="left:218px;top:442px;overflow:visible" width="16" height="17" viewBox="0 0 16 17"><g transform="translate(0,0.500)"><path d="M4.500 14.200H1.800V1.900H13.500V5" fill="none" stroke="#505050" stroke-width="1.200"/><path d="M7.600 2v7.500M2 8.200h8" stroke="#7a7a7a" stroke-width="0.800"/><path d="M15.2 7.7L8.648 14.018" stroke="#3f78b5" stroke-width="3" stroke-linecap="round" fill="none"/><path d="M8.9 13.775L6.8 15.8" stroke="#3f78b5" stroke-width="1.600" fill="none"/><path d="M12.252 8.382L14.452 10.582" stroke="#fff" stroke-width="0.700" fill="none"/></g></svg>
<svg class="r" style="left:218px;top:460px;overflow:visible" width="16" height="17" viewBox="0 0 16 17"><g transform="translate(0,0.500)"><path d="M1 1.800L15 15.200" stroke="#5a5a5a" stroke-width="0.900"/></g></svg>
<svg class="r" style="left:218px;top:478px;overflow:visible" width="16" height="17" viewBox="0 0 16 17"><g transform="translate(0,0.500)"><path d="M1 1.800L14.500 14.700" stroke="#5a5a5a" stroke-width="0.900"/><path d="M14.600 11.300V15H11" stroke="#3a3a3a" stroke-width="1.200" fill="none"/></g></svg>
<svg class="r" style="left:218px;top:496px;overflow:visible" width="16" height="17" viewBox="0 0 16 17"><g transform="translate(0,0.500)"><path d="M6.500 2.800c2 0 2.400.6 2.400 2v1.500c0 1 .5 1.500 1.700 1.500c-1.200 0-1.700.5-1.700 1.500v1.500c0 1.400-.4 2-2.400 2" fill="none" stroke="#505050" stroke-width="1.200"/></g></svg>
<svg class="r" style="left:218px;top:514px;overflow:visible" width="16" height="17" viewBox="0 0 16 17"><g transform="translate(0,0.500)"><g fill="#5a5a5a"><rect x="1" y="1.5" width="1" height="1"/><rect x="3" y="1.5" width="1" height="1"/><rect x="5" y="1.5" width="1" height="1"/><rect x="7" y="1.5" width="1" height="1"/><rect x="9" y="1.5" width="1" height="1"/><rect x="11" y="1.5" width="1" height="1"/><rect x="1" y="7.5" width="1" height="1"/><rect x="3" y="7.5" width="1" height="1"/><rect x="5" y="7.5" width="1" height="1"/><rect x="7" y="7.5" width="1" height="1"/><rect x="9" y="7.5" width="1" height="1"/><rect x="11" y="7.5" width="1" height="1"/><rect x="1" y="13.5" width="1" height="1"/><rect x="3" y="13.5" width="1" height="1"/><rect x="5" y="13.5" width="1" height="1"/><rect x="7" y="13.5" width="1" height="1"/><rect x="9" y="13.5" width="1" height="1"/><rect x="11" y="13.5" width="1" height="1"/><rect x="1" y="3.5" width="1" height="1"/><rect x="1" y="5.5" width="1" height="1"/><rect x="1" y="7.5" width="1" height="1"/><rect x="1" y="9.5" width="1" height="1"/><rect x="1" y="11.5" width="1" height="1"/><rect x="7" y="3.5" width="1" height="1"/><rect x="7" y="5.5" width="1" height="1"/><rect x="7" y="7.5" width="1" height="1"/><rect x="7" y="9.5" width="1" height="1"/><rect x="7" y="11.5" width="1" height="1"/></g><path d="M13.500 1.500v13" stroke="#3a3a3a" stroke-width="1.300"/></g></svg>
<svg class="r" style="left:218px;top:532px;overflow:visible" width="16" height="17" viewBox="0 0 16 17"><g transform="translate(0,0.500)"><rect x="0.800" y="3.200" width="14.400" height="10.400" fill="#fff" stroke="#505050" stroke-width="1.200"/></g></svg>
<svg class="r" style="left:218px;top:550px;overflow:visible" width="16" height="17" viewBox="0 0 16 17"><g transform="translate(0,0.500)"><rect x="0.800" y="3.400" width="14.400" height="10.400" rx="2.600" fill="#fff" stroke="#505050" stroke-width="1.200"/></g></svg>
<svg class="r" style="left:218px;top:568px;overflow:visible" width="16" height="17" viewBox="0 0 16 17"><g transform="translate(0,0.500)"><rect x="2.800" y="1.400" width="10.500" height="14" rx="1.200" fill="#d2d2d2" stroke="#6a6a6a" stroke-width="1"/><rect x="4.400" y="2.700" width="7.300" height="2.400" fill="#3f78b5"/><rect x="4.4" y="6.5" width="1.700" height="1.700" fill="#707070"/><rect x="7.2" y="6.5" width="1.700" height="1.700" fill="#707070"/><rect x="10" y="6.5" width="1.700" height="1.700" fill="#707070"/><rect x="4.4" y="9.4" width="1.700" height="1.700" fill="#707070"/><rect x="7.2" y="9.4" width="1.700" height="1.700" fill="#707070"/><rect x="10" y="9.4" width="1.700" height="1.700" fill="#707070"/><rect x="4.4" y="12.3" width="1.700" height="1.700" fill="#707070"/><rect x="7.2" y="12.3" width="1.700" height="1.700" fill="#707070"/><rect x="10" y="12.3" width="1.700" height="1.700" fill="#707070"/></g></svg>
<svg class="r" style="left:218px;top:604px;overflow:visible" width="16" height="17" viewBox="0 0 16 17"><g transform="translate(0,0.500)"><path d="M4.500 0.400L6.100 2.400H2.900zM4.500 9L6.100 7H2.900zM0.200 4.700L2.200 3.100V6.300zM8.800 4.700L6.800 3.100V6.300z" fill="#3f78b5"/><path d="M4.500 2.800v3.800M2.600 4.700h3.800" stroke="#3f78b5" stroke-width="1" stroke-dasharray="1 0.800"/><path d="M5.500 10.300H12.500V15.700H5.500zM5.500 10.300L9 6.500H15.800L12.500 10.300M15.800 6.500V11.700L12.500 15.700" fill="#fff" stroke="#3a3a3a" stroke-width="1.100" stroke-linejoin="round"/></g></svg>
<svg class="r" style="left:217px;top:80px;" width="28" height="30" viewBox="0 0 28 30"><path d="M0.500 0.500H13.800L20.700 7.200V17.500M0.500 0.500V27.500H15" fill="none" stroke="#6e6e6e" stroke-width="1"/><path d="M13.800 0.500V7.200H20.700" fill="none" stroke="#6e6e6e" stroke-width="1"/><rect x="2.500" y="13.200" width="15.200" height="7.200" rx="1" fill="#6e6e6e"/><rect x="6.300" y="9.300" width="7.500" height="4.200" fill="#fff" stroke="#6e6e6e" stroke-width="1"/><rect x="6.300" y="18.700" width="7.500" height="4.900" fill="#fff" stroke="#6e6e6e" stroke-width="1"/><rect x="15.200" y="18" width="11.800" height="11.800" fill="#7b3fa6"/><rect x="17.300" y="19.500" width="7.500" height="4.800" fill="#fff"/><rect x="18" y="26.400" width="6" height="3.400" fill="#fff"/><rect x="19.200" y="27.200" width="1.600" height="2.600" fill="#7b3fa6"/></svg>
<div class="r" style="left:486px;top:352.5px;width:1px;height:16px;background:#333;"></div>
<svg class="r" style="left:489.5px;top:356.5px;" width="5" height="8" viewBox="0 0 5 8"><path d="M0.300 0.300v7.400L4.300 4z" fill="#333"/></svg>
<div class="r" style="left:486px;top:406.5px;width:1px;height:16px;background:#333;"></div>
<svg class="r" style="left:489.5px;top:410.5px;" width="5" height="8" viewBox="0 0 5 8"><path d="M0.300 0.300v7.400L4.300 4z" fill="#333"/></svg>
<svg class="r" style="left:490px;top:428.5px;" width="5" height="8" viewBox="0 0 5 8"><path d="M0.300 0.300v7.400L4.300 4z" fill="#333"/></svg>
<svg class="r" style="left:490px;top:608.5px;" width="5" height="8" viewBox="0 0 5 8"><path d="M0.300 0.300v7.400L4.300 4z" fill="#333"/></svg>
<svg class="r" style="left:484px;top:389.5px;" width="16" height="15" viewBox="0 0 16 15"><rect x="0.700" y="0.700" width="14.600" height="13.600" rx="3" fill="#fff" stroke="#333" stroke-width="1.200"/><path d="M5.500 9.500h5L8 12z" fill="#333"/></svg>
<div class="r" style="left:218px;top:638px;width:13px;height:13px;background:#fff;border:1px solid #555;"></div>
<div class="t" style="left:236.70px;top:637.41px;font-size:11.80px;color:#4a4a4a;letter-spacing:-0.029px;"><u>D</u>e werkbalk Snelle toegang onder het lint weergeven</div>
<div class="r" style="left:527px;top:379px;width:101px;height:25px;background:#fdfdfd;border:1px solid #adadad;"></div>
<div class="r" style="left:527px;top:407px;width:101px;height:25px;background:#fdfdfd;border:1px solid #adadad;"></div>
<div class="t" style="left:538.00px;top:383.91px;font-size:11.80px;color:#333;letter-spacing:0.155px;"><u>T</u>oevoegen &gt;&gt;</div>
<div class="t" style="left:537.70px;top:411.91px;font-size:11.80px;color:#333;letter-spacing:0.083px;">&lt;&lt; <u>V</u>erwijderen</div>
<div class="r" style="left:637px;top:181px;width:260px;height:397px;background:#fff;border:1px solid #ababab;"></div>
<div class="r" style="left:638px;top:218px;width:258px;height:18px;background:#c6c6c6;"></div>
<svg class="r" style="left:639px;top:184px;" width="14" height="14" viewBox="0 0 14 14"><rect x="1" y="1" width="12" height="12" fill="#fff" stroke="#7b3fa6" stroke-width="2"/><rect x="1" y="6.800" width="12" height="7.200" fill="#7b3fa6"/><rect x="3.600" y="9.600" width="6.800" height="4.400" fill="#fff"/><rect x="5" y="10.600" width="1.800" height="2.600" fill="#7b3fa6"/></svg>
<svg class="r" style="left:639px;top:202px;" width="15" height="13" viewBox="0 0 15 13"><path d="M5.800 0.900L1.700 4.600L5.800 8.300" fill="none" stroke="#3f78b5" stroke-width="2.300"/><path d="M2.200 4.600H9A4 4 0 0 1 9 12.200H7.800" fill="none" stroke="#3f78b5" stroke-width="2.300"/></svg>
<svg class="r" style="left:639px;top:220px;" width="15" height="13" viewBox="0 0 15 13"><path d="M9.200 0.900L13.300 4.600L9.200 8.300" fill="none" stroke="#3f78b5" stroke-width="2.300"/><path d="M12.800 4.600H6A4 4 0 0 0 6 12.200H7.200" fill="none" stroke="#3f78b5" stroke-width="2.300"/></svg>
<div class="t" style="left:664.40px;top:182.91px;font-size:11.80px;color:#4a4a4a;letter-spacing:-0.275px;">Opslaan</div>
<div class="t" style="left:664.40px;top:200.91px;font-size:11.80px;color:#4a4a4a;letter-spacing:-0.032px;">Ongedaan maken</div>
<div class="t" style="left:664.40px;top:218.91px;font-size:11.80px;color:#111;letter-spacing:0.138px;">Opnieuw</div>
<div class="r" style="left:881px;top:201px;width:1px;height:16px;background:#333;"></div>
<svg class="r" style="left:885.5px;top:204.5px;" width="5" height="8" viewBox="0 0 5 8"><path d="M0.300 0.300v7.400L4.300 4z" fill="#333"/></svg>
<div class="r" style="left:881px;top:219px;width:1px;height:16px;background:#333;"></div>
<svg class="r" style="left:885.5px;top:222.5px;" width="5" height="8" viewBox="0 0 5 8"><path d="M0.300 0.300v7.400L4.300 4z" fill="#333"/></svg>
<div class="r" style="left:906px;top:381px;width:32px;height:23px;background:#fdfdfd;border:1px solid #8a8a8a;"></div>
<svg class="r" style="left:917.5px;top:389.5px;" width="8" height="5" viewBox="0 0 8 5"><path d="M0 4.500h7.600L3.800 0.300z" fill="#222"/></svg>
<div class="r" style="left:906px;top:407px;width:32px;height:23px;background:#fdfdfd;border:1px solid #d4d4d4;"></div>
<svg class="r" style="left:917.5px;top:415.5px;" width="8" height="5" viewBox="0 0 8 5"><path d="M0 0.300h7.600L3.800 4.500z" fill="#9a9a9a"/></svg>
<div class="r" style="left:637px;top:582px;width:75px;height:24px;background:#fdfdfd;border:1px solid #d4d4d4;"></div>
<div class="t" style="left:646.50px;top:586.41px;font-size:11.80px;color:#a0a0a0;letter-spacing:0.107px;"><u>W</u>ijzigen...</div>
<div class="t" style="left:638.00px;top:613.41px;font-size:11.80px;color:#4a4a4a;letter-spacing:-0.131px;">Aanpassingen:</div>
<div class="r" style="left:725px;top:609px;width:100px;height:24px;background:#fdfdfd;border:2px solid #ababab;"></div>
<div class="t" style="left:731.00px;top:613.41px;font-size:11.80px;color:#262626;letter-spacing:-0.086px;">B<u>e</u>ginwaarden</div>
<svg class="r" style="left:812px;top:619px;" width="8" height="5" viewBox="0 0 8 5"><path d="M0 0.300h7.600L3.800 4.500z" fill="#222"/></svg>
<svg class="r" style="left:826.5px;top:615px;" width="12" height="12" viewBox="0 0 12 12"><circle cx="6" cy="6" r="4.700" fill="#fff" stroke="#5b8cc4" stroke-width="0.900"/><rect x="5.500" y="5.200" width="1" height="3.300" fill="#4a7ab5"/><rect x="5.500" y="3.300" width="1" height="1.100" fill="#4a7ab5"/></svg>
<div class="r" style="left:725px;top:637px;width:160px;height:24px;background:#fdfdfd;border:2px solid #ababab;"></div>
<div class="t" style="left:731.00px;top:641.41px;font-size:11.80px;color:#262626;letter-spacing:0.037px;"><u>I</u>mporteren en exporteren</div>
<svg class="r" style="left:871px;top:647px;" width="8" height="5" viewBox="0 0 8 5"><path d="M0 0.300h7.600L3.800 4.500z" fill="#222"/></svg>
<svg class="r" style="left:885.5px;top:643px;" width="12" height="12" viewBox="0 0 12 12"><circle cx="6" cy="6" r="4.700" fill="#fff" stroke="#5b8cc4" stroke-width="0.900"/><rect x="5.500" y="5.200" width="1" height="3.300" fill="#4a7ab5"/><rect x="5.500" y="3.300" width="1" height="1.100" fill="#4a7ab5"/></svg>
<div class="r" style="left:793px;top:679px;width:75px;height:24px;background:#fdfdfd;border:2px solid #217346;"></div>
<div class="t" style="left:830.50px;width:400px;margin-left:-200px;text-align:center;top:683.91px;font-size:11.80px;color:#262626;">OK</div>
<div class="r" style="left:877px;top:679px;width:75px;height:24px;background:#fdfdfd;border:1px solid #adadad;"></div>
<div class="t" style="left:914.50px;width:400px;margin-left:-200px;text-align:center;top:683.91px;font-size:11.80px;color:#262626;letter-spacing:0.025px;">Annuleren</div>
<svg class="r" style="left:947px;top:699px;" width="11" height="11" viewBox="0 0 11 11"><rect x="8" y="2" width="1.500" height="1.500" fill="#bdbdbd"/><rect x="5" y="5" width="1.500" height="1.500" fill="#bdbdbd"/><rect x="8" y="5" width="1.500" height="1.500" fill="#bdbdbd"/><rect x="2" y="8" width="1.500" height="1.500" fill="#bdbdbd"/><rect x="5" y="8" width="1.500" height="1.500" fill="#bdbdbd"/><rect x="8" y="8" width="1.500" height="1.500" fill="#bdbdbd"/></svg>
</div>
</body></html>
